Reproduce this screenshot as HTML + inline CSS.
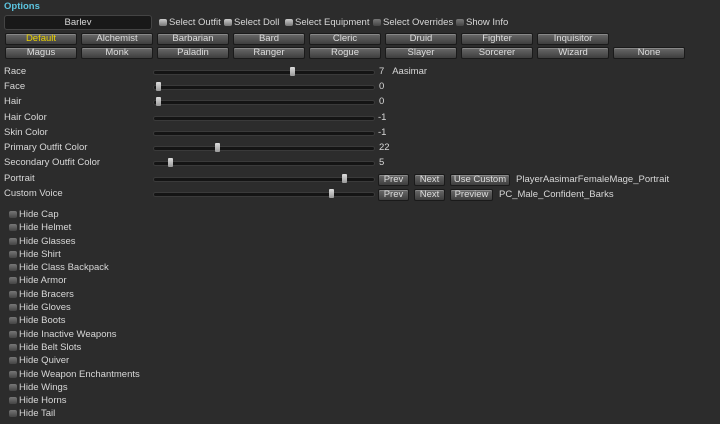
<!DOCTYPE html>
<html><head><style>
body{margin:0;width:720px;height:424px;background:#2c2c2c;font-family:"Liberation Sans",sans-serif;font-size:9.5px;color:#d8d8d8;position:relative;overflow:hidden}
.a{position:absolute;white-space:nowrap;line-height:12px}
.btn{position:absolute;height:10px;line-height:10px;text-align:center;background:linear-gradient(#6a6a6a,#3e3e3e);border:1px solid #1a1a1a;border-radius:2px;color:#ddd;font-size:9.5px;box-shadow:inset 0 1px 0 #888}
.sl{position:absolute;left:153px;width:220px;height:3px;background:#141414;border:1px solid #3a3a3a;border-radius:3px}
.k{position:absolute;top:-4px;width:5px;height:9px;background:linear-gradient(#ddd,#999);border-radius:1px;margin-left:-3px}
.cb{display:inline-block;width:8px;height:7px;background:linear-gradient(#ccc,#777);border-radius:2px;margin-right:2px;vertical-align:-1px}
.cbd{background:linear-gradient(#777,#444)}
</style></head><body>
<div class="a" style="left:4px;top:1px;color:#5cc4df;font-weight:bold">Options</div>
<div class="a" style="left:4px;top:15px;width:146px;height:13px;background:#191919;border:1px solid #444;border-radius:3px;text-align:center;line-height:13px">Barlev</div>
<div class="a" style="left:159px;top:17px"><span class="cb"></span>Select Outfit</div>
<div class="a" style="left:224px;top:17px"><span class="cb"></span>Select Doll</div>
<div class="a" style="left:285px;top:17px"><span class="cb"></span>Select Equipment</div>
<div class="a" style="left:373px;top:17px"><span class="cb cbd"></span>Select Overrides</div>
<div class="a" style="left:456px;top:17px"><span class="cb cbd"></span>Show Info</div>

<div class="btn" style="left:5px;top:33px;width:70px;color:#e8d000">Default</div>
<div class="btn" style="left:81px;top:33px;width:70px">Alchemist</div>
<div class="btn" style="left:157px;top:33px;width:70px">Barbarian</div>
<div class="btn" style="left:233px;top:33px;width:70px">Bard</div>
<div class="btn" style="left:309px;top:33px;width:70px">Cleric</div>
<div class="btn" style="left:385px;top:33px;width:70px">Druid</div>
<div class="btn" style="left:461px;top:33px;width:70px">Fighter</div>
<div class="btn" style="left:537px;top:33px;width:70px">Inquisitor</div>
<div class="btn" style="left:5px;top:47px;width:70px">Magus</div>
<div class="btn" style="left:81px;top:47px;width:70px">Monk</div>
<div class="btn" style="left:157px;top:47px;width:70px">Paladin</div>
<div class="btn" style="left:233px;top:47px;width:70px">Ranger</div>
<div class="btn" style="left:309px;top:47px;width:70px">Rogue</div>
<div class="btn" style="left:385px;top:47px;width:70px">Slayer</div>
<div class="btn" style="left:461px;top:47px;width:70px">Sorcerer</div>
<div class="btn" style="left:537px;top:47px;width:70px">Wizard</div>
<div class="btn" style="left:613px;top:47px;width:70px">None</div>

<div class="a" style="left:4px;top:66px">Race</div><div class="sl" style="top:70px"><div class="k" style="left:139px"></div></div><div class="a" style="left:379px;top:66px">7 &nbsp;&nbsp;Aasimar</div>
<div class="a" style="left:4px;top:81px">Face</div><div class="sl" style="top:85px"><div class="k" style="left:5px"></div></div><div class="a" style="left:379px;top:81px">0</div>
<div class="a" style="left:4px;top:96px">Hair</div><div class="sl" style="top:100px"><div class="k" style="left:5px"></div></div><div class="a" style="left:379px;top:96px">0</div>
<div class="a" style="left:4px;top:112px">Hair Color</div><div class="sl" style="top:116px"></div><div class="a" style="left:378px;top:112px">-1</div>
<div class="a" style="left:4px;top:127px">Skin Color</div><div class="sl" style="top:131px"></div><div class="a" style="left:378px;top:127px">-1</div>
<div class="a" style="left:4px;top:142px">Primary Outfit Color</div><div class="sl" style="top:146px"><div class="k" style="left:64px"></div></div><div class="a" style="left:379px;top:142px">22</div>
<div class="a" style="left:4px;top:157px">Secondary Outfit Color</div><div class="sl" style="top:161px"><div class="k" style="left:17px"></div></div><div class="a" style="left:379px;top:157px">5</div>
<div class="a" style="left:4px;top:173px">Portrait</div><div class="sl" style="top:177px"><div class="k" style="left:191px"></div></div>
<div class="btn" style="left:378px;top:174px;width:29px">Prev</div><div class="btn" style="left:414px;top:174px;width:29px">Next</div><div class="btn" style="left:450px;top:174px;width:58px">Use Custom</div>
<div class="a" style="left:516px;top:174px">PlayerAasimarFemaleMage_Portrait</div>
<div class="a" style="left:4px;top:188px">Custom Voice</div><div class="sl" style="top:192px"><div class="k" style="left:178px"></div></div>
<div class="btn" style="left:378px;top:189px;width:29px">Prev</div><div class="btn" style="left:414px;top:189px;width:29px">Next</div><div class="btn" style="left:450px;top:189px;width:41px">Preview</div>
<div class="a" style="left:499px;top:189px">PC_Male_Confident_Barks</div>

<div class="a" style="left:9px;top:208px;line-height:13.3px">
<span class="cb cbd"></span>Hide Cap<br><span class="cb cbd"></span>Hide Helmet<br><span class="cb cbd"></span>Hide Glasses<br><span class="cb cbd"></span>Hide Shirt<br><span class="cb cbd"></span>Hide Class Backpack<br><span class="cb cbd"></span>Hide Armor<br><span class="cb cbd"></span>Hide Bracers<br><span class="cb cbd"></span>Hide Gloves<br><span class="cb cbd"></span>Hide Boots<br><span class="cb cbd"></span>Hide Inactive Weapons<br><span class="cb cbd"></span>Hide Belt Slots<br><span class="cb cbd"></span>Hide Quiver<br><span class="cb cbd"></span>Hide Weapon Enchantments<br><span class="cb cbd"></span>Hide Wings<br><span class="cb cbd"></span>Hide Horns<br><span class="cb cbd"></span>Hide Tail
</div>
</body></html>
